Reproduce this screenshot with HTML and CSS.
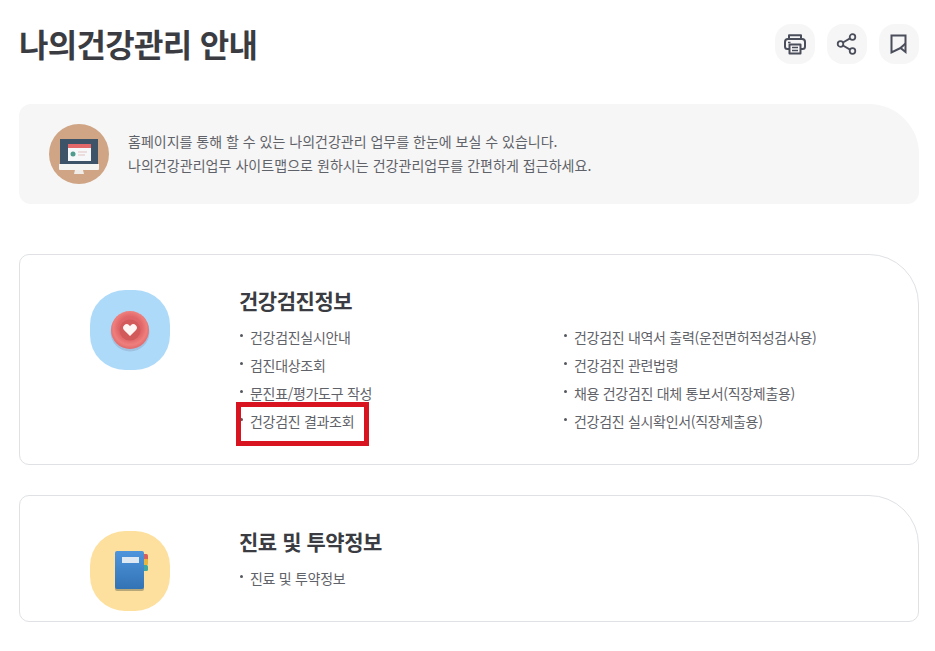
FILE: index.html
```html
<!DOCTYPE html>
<html lang="ko">
<head>
<meta charset="utf-8">
<title>나의건강관리 안내</title>
<link rel="stylesheet" href="styles.css">
</head>
<body>
<main class="page">
  <header class="head">
    <h1 class="title">나의건강관리 안내</h1>
    <div class="tools">
      <button class="tool" aria-label="인쇄">
        <svg viewBox="0 0 24 24" width="24" height="24" fill="none" stroke="#4a4d5a" stroke-width="2" stroke-linejoin="round">
          <path d="M6 7V3.200h12V7"/>
          <path d="M6 17H4.500A2.500 2.500 0 0 1 2 14.500V10a3 3 0 0 1 3-3h14a3 3 0 0 1 3 3v4.500a2.500 2.500 0 0 1-2.500 2.500H18"/>
          <path d="M6.500 12.500h11v9h-11z"/>
          <path d="M9 15.500h6M9 18.500h6" stroke-width="1.500"/>
          <path d="M5 10.500h2.500" stroke-width="1.500"/>
        </svg>
      </button>
      <button class="tool" aria-label="공유">
        <svg viewBox="0 0 24 24" width="24" height="24" fill="none" stroke="#4a4d5a" stroke-width="1.800">
          <circle cx="5.500" cy="12" r="2.800"/>
          <circle cx="17.500" cy="5" r="2.800"/>
          <circle cx="17.500" cy="19" r="2.800"/>
          <path d="M8 10.500l7-4.100M8 13.500l7 4.100"/>
        </svg>
      </button>
      <button class="tool" aria-label="즐겨찾기">
        <svg viewBox="0 0 24 24" width="24" height="24" fill="none" stroke="#4a4d5a" stroke-width="2" stroke-linejoin="miter">
          <path d="M4.500 3.500h14v16.500l-5-4-9 4.500z"/>
          <path d="M13.500 16l5-4.500"/>
        </svg>
      </button>
    </div>
  </header>

  <section class="intro">
    <svg class="intro-icon" viewBox="0 0 60 60" width="60" height="60">
      <circle cx="30" cy="30" r="30" fill="#cfa585"/>
      <rect x="11" y="15" width="38" height="26" fill="#3d5468"/>
      <path d="M10 40h40v5a1 1 0 0 1-1 1H11a1 1 0 0 1-1-1z" fill="#f4f4f2"/>
      <path d="M26 46h8l1 4H25z" fill="#f0ede8"/>
      <rect x="19" y="20" width="23" height="17" fill="#f6f7f8"/>
      <rect x="19" y="20" width="23" height="4" fill="#e2686a"/>
      <circle cx="24" cy="30" r="2.500" fill="#4f9c8e"/>
      <path d="M29 28h9M29 31h7" stroke="#e3c3c3" stroke-width="1"/>
    </svg>
    <p class="intro-text">홈페이지를 통해 할 수 있는 나의건강관리 업무를 한눈에 보실 수 있습니다.<br><span class="intro-second">나의건강관리업무 사이트맵으로 원하시는 건강관리업무를 간편하게 접근하세요.</span></p>
  </section>

  <section class="card card-first">
    <div class="badge badge-blue">
      <svg viewBox="0 0 44 44" width="44" height="44">
        <defs>
          <radialGradient id="ring" cx="50%" cy="45%" r="55%">
            <stop offset="0" stop-color="#dc6265"/>
            <stop offset="0.55" stop-color="#e06568"/>
            <stop offset="0.8" stop-color="#ee7f7c"/>
            <stop offset="1" stop-color="#e06a6c"/>
          </radialGradient>
        </defs>
        <circle cx="22" cy="24" r="19.500" fill="#8a9dbb" opacity=".4"/>
        <circle cx="22" cy="22" r="19" fill="url(#ring)"/>
        <circle cx="22" cy="22" r="10.500" fill="#d25a5a"/>
        <path d="M22 28l-5.800-5.800a3.500 3.500 0 0 1 5-4.900l.8.900.8-.9a3.500 3.500 0 0 1 5 4.900z" fill="#fdf6f4"/>
      </svg>
    </div>
    <div class="body">
      <h2 class="card-title">건강검진정보</h2>
      <div class="cols">
        <ul class="links">
          <li>건강검진실시안내</li>
          <li>검진대상조회</li>
          <li>문진표/평가도구 작성</li>
          <li class="marked">건강검진 결과조회<span class="mark"></span></li>
        </ul>
        <ul class="links">
          <li>건강검진 내역서 출력(운전면허적성검사용)</li>
          <li>건강검진 관련법령</li>
          <li>채용 건강검진 대체 통보서(직장제출용)</li>
          <li>건강검진 실시확인서(직장제출용)</li>
        </ul>
      </div>
    </div>
  </section>

  <section class="card card-second">
    <div class="badge badge-yellow">
      <svg viewBox="0 0 36 42" width="36" height="42">
        <defs>
          <linearGradient id="book" x1="0" y1="0" x2="0" y2="1">
            <stop offset="0" stop-color="#4f95dc"/>
            <stop offset="1" stop-color="#3273b4"/>
          </linearGradient>
        </defs>
        <rect x="29" y="4" width="7" height="6" rx="1.500" fill="#d9605a"/>
        <rect x="29" y="9" width="7" height="6" rx="1" fill="#e8b63e"/>
        <rect x="29" y="15" width="7" height="6" rx="1.500" fill="#3fa7a0"/>
        <rect x="3" y="3" width="29" height="38" rx="2" fill="#7d7a5c" opacity=".55"/>
        <rect x="3" y="1" width="29" height="38" rx="2" fill="url(#book)"/>
        <rect x="10" y="7" width="17" height="6" fill="#dfe9f4"/>
      </svg>
    </div>
    <div class="body">
      <h2 class="card-title">진료 및 투약정보</h2>
      <div class="cols">
        <ul class="links">
          <li>진료 및 투약정보</li>
        </ul>
      </div>
    </div>
  </section>
</main>
</body>
</html>
```

FILE: styles.css
```css
* {
  box-sizing: border-box;
}

html,
body {
  margin: 0;
  padding: 0;
  background: #fff;
}

body {
  font-family: "Noto Sans CJK KR", "Noto Sans", sans-serif;
  color: #444;
}

.page {
  width: 935px;
  height: 651px;
  padding: 0 16px 0 19px;
  overflow: hidden;
}

.head {
  display: flex;
  justify-content: space-between;
  align-items: flex-start;
  height: 104px;
  padding-top: 24px;
}

.title {
  margin: -1px 0 0;
  font-size: 32px;
  font-weight: 700;
  line-height: 40px;
  letter-spacing: -0.7px;
  color: #3a3c42;
}

.tools {
  display: flex;
  gap: 12px;
}

.tool {
  display: flex;
  align-items: center;
  justify-content: center;
  width: 40px;
  height: 40px;
  padding: 0;
  border: 0;
  border-radius: 16px;
  background: #f6f6f6;
}

.intro {
  display: flex;
  align-items: center;
  gap: 19px;
  height: 100px;
  padding-left: 30px;
  border-radius: 12px 50px 12px 12px;
  background: #f6f6f6;
}

.intro-icon {
  flex: none;
}

.intro-text {
  margin: -3px 0 0;
  font-size: 14px;
  line-height: 24px;
  color: #5f6268;
}

.intro-second {
  letter-spacing: 0.05px;
}

.card {
  display: flex;
  border: 1px solid #dfe1e5;
  border-radius: 10px 50px 10px 10px;
  background: #fff;
}

.card-first {
  height: 211px;
  margin-top: 50px;
}

.card-second {
  height: 127px;
  margin-top: 30px;
}

.badge {
  flex: none;
  display: flex;
  align-items: center;
  justify-content: center;
  width: 80px;
  height: 80px;
  margin: 35px 70px 0 70px;
  border-radius: 35px;
}

.badge-blue {
  background: #aedafa;
}

.badge-yellow {
  background: #fde09e;
}

.body {
  flex: 1;
  padding-top: 31px;
}

.card-title {
  margin: 0 0 9px -1px;
  font-size: 21px;
  font-weight: 700;
  line-height: 28px;
  letter-spacing: -0.45px;
  color: #3a3c42;
}

.cols {
  display: grid;
  grid-template-columns: 324px 1fr;
}

.links {
  margin: 0;
  padding: 0;
  list-style: none;
}

.links li {
  position: relative;
  height: 28px;
  padding-left: 10px;
  font-size: 14px;
  line-height: 28px;
  letter-spacing: -0.3px;
  color: #5f6268;
}

.links li::before {
  content: "";
  position: absolute;
  left: 0;
  top: 11px;
  width: 3px;
  height: 3px;
  border-radius: 50%;
  background: #55585e;
}

.mark {
  position: absolute;
  left: -4px;
  top: -5px;
  width: 133px;
  height: 44px;
  border: 5px solid #d7141f;
}
```
